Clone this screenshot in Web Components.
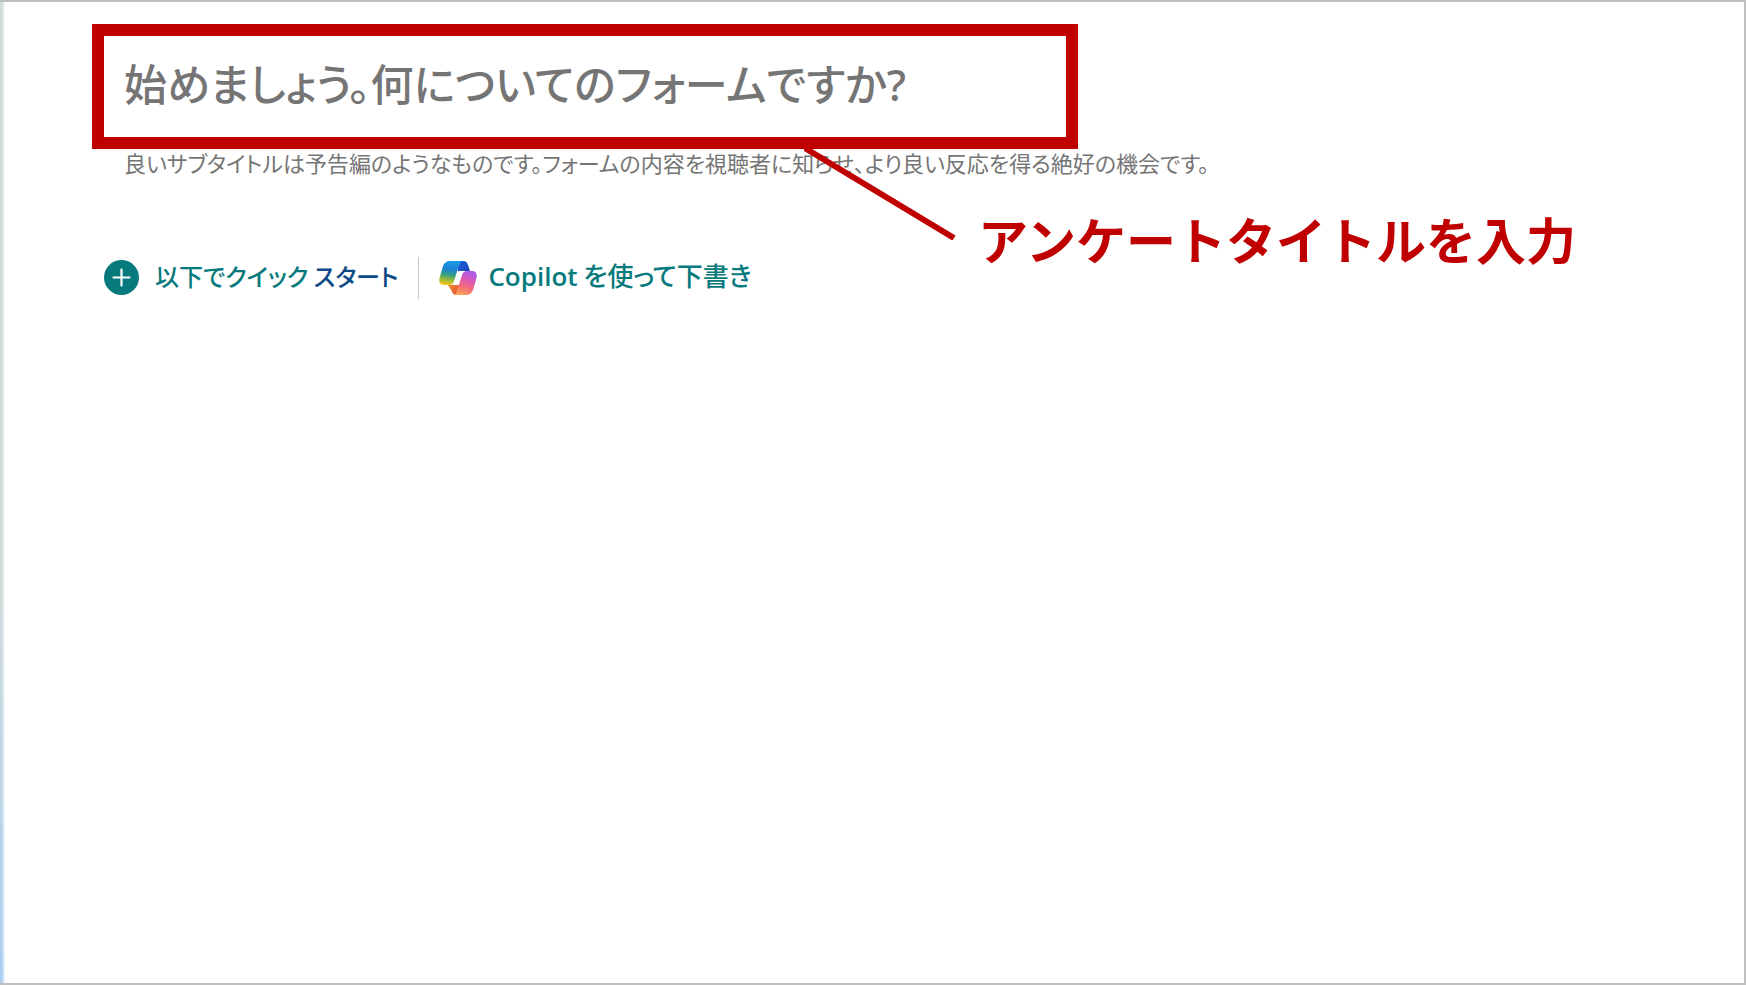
<!DOCTYPE html>
<html lang="ja">
<head>
<meta charset="utf-8">
<meta name="viewport" content="width=device-width, initial-scale=1">
<title>フォーム</title>
<style>
  html, body { margin: 0; height: 100%; }
  body { font-family: "Noto Sans", "Noto Sans CJK JP", sans-serif; background: #fff; }
</style>
</head>
<body>
<form-page></form-page>
<script>
const define = (name, html, setup) => {
  const template = document.createElement('template');
  template.innerHTML = html;
  customElements.define(name, class extends HTMLElement {
    connectedCallback() {
      if (this.shadowRoot) return;
      this.attachShadow({ mode: 'open' }).append(template.content.cloneNode(true));
      if (setup) setup(this, this.shadowRoot);
    }
  });
};

/* Borderless text field that shows its prompt until something is typed */
define('prompt-field', `
  <style>
    :host { display: block; }
    input {
      display: block; width: 100%; box-sizing: border-box; margin: 0; padding: 0; border: 0;
      background: transparent; outline: 0; color: #757575;
      font: var(--field-font); font-feature-settings: "palt";
      height: var(--field-height);
    }
    input::placeholder { color: #757575; opacity: 1; }
  </style>
  <input type="text">`, (host, root) => {
    const input = root.querySelector('input');
    input.placeholder = host.getAttribute('prompt');
    input.setAttribute('aria-label', host.getAttribute('label'));
  });

/* Red frame round the slotted content, with a leader line and a note */
define('note-frame', `
  <style>
    :host { display: block; position: relative; box-sizing: border-box; border: 12px solid #c00000; }
    .note { position: absolute; left: 700px; top: 112px; display: flex; pointer-events: none; }
    svg { display: block; flex: none; }
    p {
      margin: 54px 0 0 22px; color: #c00000; white-space: nowrap;
      font: 700 50px/72px "Noto Sans CJK JP", sans-serif;
    }
  </style>
  <slot></slot>
  <div class="note">
    <svg width="152" height="92" viewBox="0 0 152 92" aria-hidden="true">
      <path d="M-6-4 150 90" stroke="#c00000" stroke-width="6" fill="none"/>
    </svg>
    <p><slot name="note"></slot></p>
  </div>`);

define('action-button', `
  <style>
    :host { display: block; }
    button {
      display: flex; align-items: center; gap: var(--gap, 16px); margin: 0; padding: 0; border: 0;
      background: none; color: #077a7d; cursor: pointer; white-space: nowrap;
      font: var(--action-font); font-feature-settings: "palt";
    }
    .text { padding-bottom: 4px; }
  </style>
  <button type="button"><slot name="icon"></slot><span class="text"><slot></slot></span></button>`);

define('plus-icon', `
  <style>:host { display: block; } svg { display: block; }</style>
  <svg width="35" height="35" viewBox="0 0 35 35" aria-hidden="true">
    <circle cx="17.500" cy="17.500" r="17.500" fill="#077a7d"/>
    <path d="M17.500 9.500v16M9.500 17.500h16" stroke="#fff" stroke-width="2.200" stroke-linecap="round"/>
  </svg>`);

define('copilot-icon', `
  <style>:host { display: block; } svg { display: block; }</style>
  <svg width="38" height="36" viewBox="0 0 38 36" aria-hidden="true">
    <defs>
      <linearGradient id="cool" x1=".55" y1="0" x2=".4" y2="1">
        <stop offset="0" stop-color="#169be6"/><stop offset=".35" stop-color="#1c83d4"/>
        <stop offset=".6" stop-color="#3aa27f"/><stop offset=".8" stop-color="#9dbb37"/>
        <stop offset="1" stop-color="#f2c420"/>
      </linearGradient>
      <linearGradient id="deep" x1="0" y1="0" x2="1" y2="1">
        <stop offset="0" stop-color="#1a5fd8"/><stop offset="1" stop-color="#1c3fb4"/>
      </linearGradient>
      <linearGradient id="warm" x1=".7" y1="0" x2=".35" y2="1">
        <stop offset="0" stop-color="#a95bea"/><stop offset=".35" stop-color="#d85bb8"/>
        <stop offset=".65" stop-color="#f46a78"/><stop offset="1" stop-color="#fba458"/>
      </linearGradient>
      <linearGradient id="ember" x1="0" y1="0" x2="1" y2="1">
        <stop offset="0" stop-color="#f58a2c"/><stop offset="1" stop-color="#dc4a34"/>
      </linearGradient>
    </defs>
    <path d="M19 1h5c3 0 4 1.500 5 4l2 6h-6c-3 0-5 1-6 4z" fill="url(#deep)"/>
    <path d="M9 25h12l-3 10c-3 0-4.500-1.500-5.500-4.500z" fill="url(#ember)"/>
    <path d="M11 1h13c-2 0-3 1.500-4 4.500l-5 15.500c-.8 2.500-2 4-5 4H5c-4 0-5.500-3-4.500-7L4 6c1-3 3.500-5 7-5z" fill="url(#cool)"/>
    <path d="M27 35H14c2 0 3-1.500 4-4.500l5-15.500c.8-2.500 2-4 5-4h5c4 0 5.500 3 4.500 7L34 30c-1 3-3.500 5-7 5z" fill="url(#warm)"/>
    <path d="M19.500 11H26c-2 .6-2.600 2-3.200 4L19.500 25H13c1.200-.7 1.600-2 2.200-4z" fill="#fff"/>
  </svg>`);

define('form-page', `
  <style>
    :host {
      display: block; box-sizing: border-box; min-height: 100%;
      border: 2px solid #bfbfbf; border-left: 0;
      background:
        linear-gradient(to right, transparent 2px, #fff 5px),
        linear-gradient(#d0dcdc, #d0dcdc 60%, #a9cef2);
    }
    main { display: flex; flex-direction: column; padding: 22px 88px; overflow: hidden; }
    note-frame { width: 986px; max-width: 100%; margin-left: 4px; z-index: 1; }
    .title { padding: 0 20px 5px; --field-font: 500 43px/64px "Noto Sans", "Noto Sans CJK JP", sans-serif; --field-height: 96px; }
    .subtitle { margin-left: 36px; --field-font: 400 22px/26px "Noto Sans CJK JP", sans-serif; --field-height: 26px; }
    .actions { display: flex; align-items: center; margin: 80px 0 0 16px; }
    .actions hr { width: 1px; height: 42px; margin: 0 20px; border: 0; background: #c8c8c8; }
    .quick { --action-font: 500 24px/40px "Noto Sans CJK JP", sans-serif; }
    .copilot { --gap: 11px; --action-font: 500 26px/40px "Noto Sans CJK JP", sans-serif; }
    .accent { color: #0b4a86; }
    .latin { font-family: "Open Sans", sans-serif; font-weight: 600; }
  </style>
  <main>
    <note-frame>
      <prompt-field class="title" label="フォームのタイトル" prompt="始めましょう。何についてのフォームですか?"></prompt-field>
      <span slot="note">アンケートタイトルを入力</span>
    </note-frame>
    <prompt-field class="subtitle" label="サブタイトル" prompt="良いサブタイトルは予告編のようなものです。フォームの内容を視聴者に知らせ、より良い反応を得る絶好の機会です。"></prompt-field>
    <div class="actions">
      <action-button class="quick"><plus-icon slot="icon"></plus-icon>以下でクイック <span class="accent">スタート</span></action-button>
      <hr>
      <action-button class="copilot"><copilot-icon slot="icon"></copilot-icon><span class="latin">Copilot</span> を使って下書き</action-button>
    </div>
  </main>`);
</script>
</body>
</html>
